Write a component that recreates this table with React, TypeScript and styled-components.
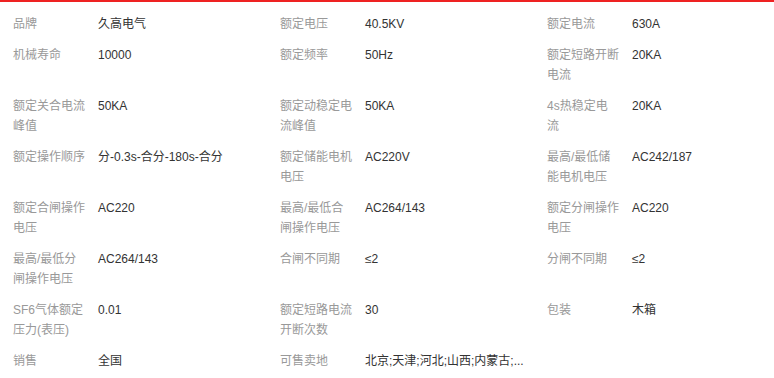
import React, { ReactElement } from 'react';
import styled, { createGlobalStyle } from 'styled-components';

// Global
const GlobalStyle = createGlobalStyle`
  html, body {
    margin: 0;
    padding: 0;
    background: #fff;
    overflow: hidden;
  }

  body {
    font-family: "Liberation Sans", Arial, "Noto Sans CJK SC", sans-serif;
    font-size: 12px;
  }
`;

// Styled Components
const ParamsWrapper = styled.div`
  width: 774px;
  height: 378px;
  box-sizing: border-box;
  border-top: 2px solid #ee2222;
  padding: 12px 0 0 13px;
  overflow: hidden;
`;

const ParamsList = styled.ul`
  margin: 0;
  padding: 0;
  list-style: none;
  display: grid;
  grid-template-columns: 267px 267px 1fr;
  row-gap: 11px;
`;

const ParamItem = styled.li`
  display: flex;
  align-items: flex-start;
  line-height: 20px;
`;

const ParamLabel = styled.span`
  flex: none;
  width: 72px;
  margin-right: 13px;
  color: #999;
  word-break: break-all;
`;

const ParamValue = styled.span`
  flex: 1;
  min-width: 0;
  color: #333;
  white-space: nowrap;
`;

// Data
interface Param {
  label: string;
  value: string;
}

const params: Param[] = [
  { label: '品牌', value: '久高电气' },
  { label: '额定电压', value: '40.5KV' },
  { label: '额定电流', value: '630A' },
  { label: '机械寿命', value: '10000' },
  { label: '额定频率', value: '50Hz' },
  { label: '额定短路开断电流', value: '20KA' },
  { label: '额定关合电流峰值', value: '50KA' },
  { label: '额定动稳定电流峰值', value: '50KA' },
  { label: '4s热稳定电流', value: '20KA' },
  { label: '额定操作顺序', value: '分-0.3s-合分-180s-合分' },
  { label: '额定储能电机电压', value: 'AC220V' },
  { label: '最高/最低储能电机电压', value: 'AC242/187' },
  { label: '额定合闸操作电压', value: 'AC220' },
  { label: '最高/最低合闸操作电压', value: 'AC264/143' },
  { label: '额定分闸操作电压', value: 'AC220' },
  { label: '最高/最低分闸操作电压', value: 'AC264/143' },
  { label: '合闸不同期', value: '≤2' },
  { label: '分闸不同期', value: '≤2' },
  { label: 'SF6气体额定压力(表压)', value: '0.01' },
  { label: '额定短路电流开断次数', value: '30' },
  { label: '包装', value: '木箱' },
  { label: '销售', value: '全国' },
  { label: '可售卖地', value: '北京;天津;河北;山西;内蒙古;...' },
];

const App = (): ReactElement => (
  <>
    <GlobalStyle />
    <ParamsWrapper>
      <ParamsList>
        {params.map((param) => (
          <ParamItem key={param.label}>
            <ParamLabel>{param.label}</ParamLabel>
            <ParamValue>{param.value}</ParamValue>
          </ParamItem>
        ))}
      </ParamsList>
    </ParamsWrapper>
  </>
);

export default App;
